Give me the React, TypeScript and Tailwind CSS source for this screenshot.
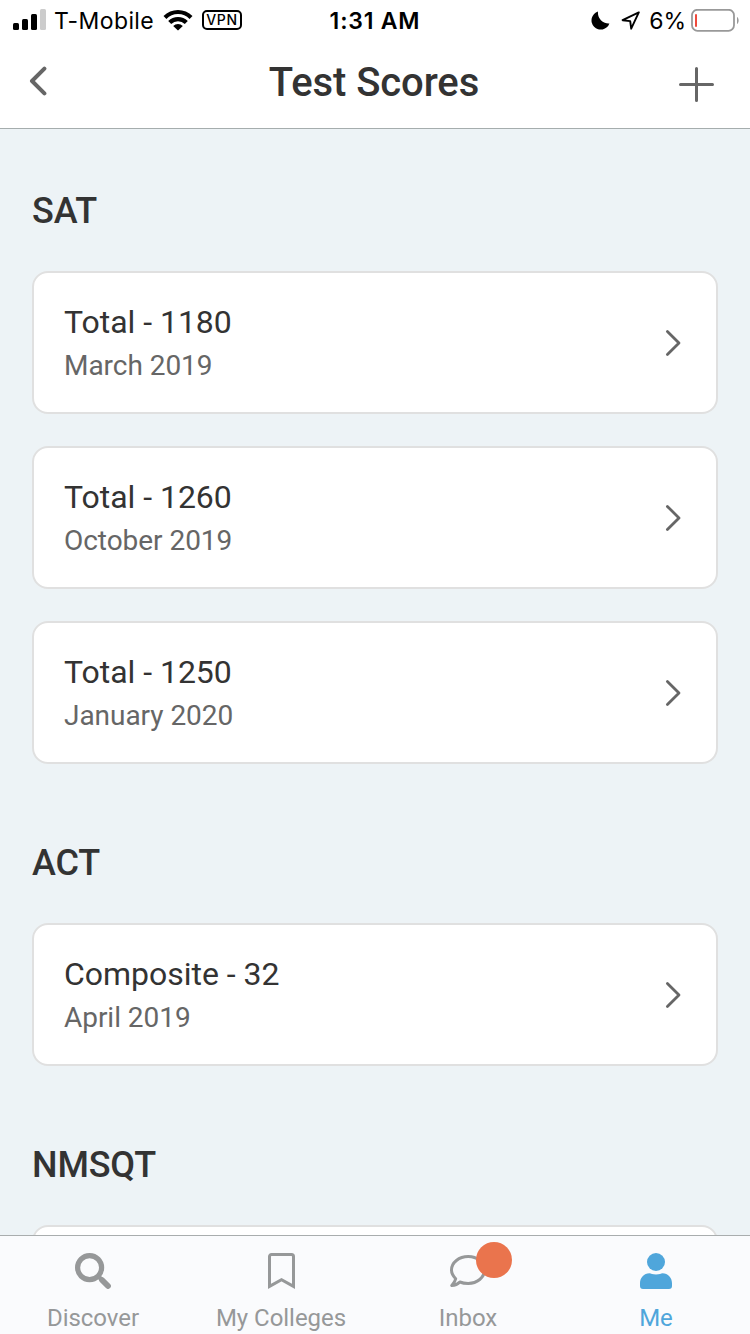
import type { ReactNode } from "react";

type Score = {
  label: string;
  date: string;
};

type Section = {
  title: string;
  scores: Score[];
};

const sections: Section[] = [
  {
    title: "SAT",
    scores: [
      { label: "Total - 1180", date: "March 2019" },
      { label: "Total - 1260", date: "October 2019" },
      { label: "Total - 1250", date: "January 2020" },
    ],
  },
  {
    title: "ACT",
    scores: [{ label: "Composite - 32", date: "April 2019" }],
  },
  {
    title: "NMSQT",
    scores: [{ label: "", date: "" }],
  },
];

function StatusBar() {
  return (
    <div className="grid grid-cols-[1fr_auto_1fr] items-center h-10 pl-[13px] pr-[11px] text-black font-['Inter','Liberation_Sans',sans-serif]">
      <div className="flex items-center">
        <svg width="33" height="22" viewBox="0 0 33 22">
          <rect x="0" y="14" width="6" height="7" rx="1.5" />
          <rect x="9" y="10" width="6" height="11" rx="1.5" />
          <rect x="18" y="5" width="6" height="16" rx="1.5" />
          <rect x="27" y="0" width="6" height="21" rx="1.5" fill="#cccccc" />
        </svg>
        <span className="ml-2 w-[101px] pt-0.5 text-[23px] leading-7 tracking-[0.4px] whitespace-nowrap">
          T-Mobile
        </span>
        <svg className="ml-2" width="30" height="22" viewBox="0 0 30 22">
          <path d="M0.5 7a20.5 20.5 0 0 1 29 0l-2.9 2.9a16.4 16.4 0 0 0-23.2 0z" />
          <path d="M5.2 12a13.9 13.9 0 0 1 19.6 0l-3 3a9.7 9.7 0 0 0-13.6 0z" />
          <path d="M10.2 17a6.8 6.8 0 0 1 9.6 0L15 21.6z" />
        </svg>
        <span className="ml-[9px] flex items-center justify-center w-10 h-5 border-2 border-black rounded-[5px] text-[14px] leading-none font-medium tracking-[0.6px]">
          VPN
        </span>
      </div>

      <span className="pt-0.5 pr-0.5 text-[23px] leading-7 font-semibold tracking-[0.8px]">
        1:31 AM
      </span>

      <div className="flex items-center justify-end">
        <svg width="19" height="19" viewBox="0 0 19 19">
          <path d="M7 0.6A10.6 10.6 0 0 0 18.4 12.4 9.2 9.2 0 1 1 7 0.6z" />
        </svg>
        <svg
          className="ml-[11px]"
          width="19"
          height="19"
          viewBox="0 0 19 19"
          fill="none"
          stroke="black"
          strokeWidth="1.9"
          strokeLinejoin="round"
        >
          <path d="M17.8 1.4 1.6 9.2l7.6.9 1 7.6z" />
        </svg>
        <span className="ml-[9px] pt-0.5 text-[23px] leading-7 tracking-[-0.1px]">
          6%
        </span>
        <svg className="ml-[5px]" width="48" height="23" viewBox="0 0 48 23">
          <rect
            x="1"
            y="0.8"
            width="42"
            height="21"
            rx="5.5"
            fill="none"
            stroke="#999999"
            strokeWidth="1.8"
          />
          <rect x="4" y="5" width="2" height="13" rx="1" fill="#ef4a3c" />
          <path d="M46 8c2.2 1.2 2.2 5.8 0 7z" fill="#999999" />
        </svg>
      </div>
    </div>
  );
}

function Header() {
  return (
    <header className="shrink-0 h-[129px] bg-white border-b border-[#a5adad]">
      <StatusBar />
      <div className="grid grid-cols-[1fr_auto_1fr] items-center h-[84px] px-[29px]">
        <button aria-label="Back" className="justify-self-start pb-0.5">
          <svg
            width="18"
            height="30"
            viewBox="0 0 18 30"
            fill="none"
            stroke="#666666"
            strokeWidth="4"
            strokeLinecap="round"
            strokeLinejoin="round"
          >
            <path d="M15.4 2.6 3 15l12.4 12.4" />
          </svg>
        </button>
        <h1 className="pt-0.5 pr-0.5 text-[40px] leading-[48px] font-medium tracking-[-0.1px] text-[#333333]">
          Test Scores
        </h1>
        <button aria-label="Add" className="justify-self-end mr-[7px] pt-1">
          <svg
            width="35"
            height="35"
            viewBox="0 0 35 35"
            stroke="#666666"
            strokeWidth="3"
            strokeLinecap="round"
          >
            <path d="M17.5 1.5v32M1.5 17.5h32" />
          </svg>
        </button>
      </div>
    </header>
  );
}

function ScoreCard({ score }: { score: Score }) {
  return (
    <div className="flex items-center justify-between h-[143px] pl-[30px] pr-[35px] bg-white border-2 border-[#e0e0e0] rounded-2xl">
      <div className="flex flex-col gap-2">
        <p className="text-[32px] leading-[38px] tracking-[-0.03px] text-[#333333]">
          {score.label}
        </p>
        <p className="text-[28px] leading-[33px] tracking-[-0.04px] text-[#666666]">
          {score.date}
        </p>
      </div>
      <svg
        width="16"
        height="28"
        viewBox="0 0 16 28"
        fill="none"
        stroke="#666666"
        strokeWidth="2.8"
        strokeLinecap="round"
        strokeLinejoin="round"
      >
        <path d="M2.4 2.4 14 14 2.4 25.6" />
      </svg>
    </div>
  );
}

type TabProps = {
  label: string;
  active?: boolean;
  children: ReactNode;
};

function Tab({ label, active, children }: TabProps) {
  return (
    <button
      className={`flex flex-col items-center pt-[17px] ${
        active ? "text-[#4fa6db]" : "text-[#969899]"
      }`}
    >
      <span className="relative flex items-center justify-center h-9">
        {children}
      </span>
      <span className="mt-[15px] text-[24px] leading-7 tracking-[-0.03px] whitespace-nowrap">
        {label}
      </span>
    </button>
  );
}

function TabBar() {
  return (
    <nav className="shrink-0 grid grid-cols-[186px_190px_184px_192px] h-[99px] bg-[#fafbfd] border-t border-[#a9adae]">
      <Tab label="Discover">
        <svg
          width="36"
          height="36"
          viewBox="0 0 36 36"
          fill="none"
          stroke="currentColor"
        >
          <circle cx="14.6" cy="14.6" r="12" strokeWidth="5.2" />
          <path d="M23 23l4 4" strokeWidth="4.4" />
          <path
            d="M27 27l6 6"
            strokeWidth="5.8"
            strokeLinecap="round"
            strokeLinejoin="round"
          />
        </svg>
      </Tab>
      <Tab label="My Colleges">
        <svg
          width="27"
          height="36"
          viewBox="0 0 27 36"
          fill="none"
          stroke="currentColor"
          strokeWidth="3"
        >
          <path d="M1.5 33.4V3.5a2 2 0 0 1 2-2h20a2 2 0 0 1 2 2v29.9L13.5 26.8z" />
        </svg>
      </Tab>
      <Tab label="Inbox">
        <svg
          width="36"
          height="36"
          viewBox="0 0 36 36"
          fill="none"
          stroke="currentColor"
          strokeWidth="3"
          strokeLinejoin="round"
        >
          <path d="M18.2 3.6C9 3.6 1.5 9.5 1.5 17c0 3.1 1.5 6 4.2 8.700-.5 2.400-2 4.600-3.900 6.800 3.400-.1 6-1.400 8-3.500 2.600 1 5.400 1.400 8.400 1.400 9 0 16.300-6 16.300-13.400S27.200 3.600 18.200 3.600z" />
        </svg>
        <span className="absolute left-[26px] -top-[11px] size-9 rounded-full bg-[#ea744d]" />
      </Tab>
      <Tab label="Me" active>
        <svg width="32" height="36" viewBox="0 0 32 36" fill="currentColor">
          <circle cx="16" cy="9" r="9" />
          <path d="M9.500 20.300c1.500 0 3 1.300 6.500 1.300s5-1.300 6.500-1.300c5.500 0 9.500 4.500 9.500 10V33a3 3 0 0 1-3 3H3a3 3 0 0 1-3-3v-2.700c0-5.500 4-10 9.500-10z" />
        </svg>
      </Tab>
    </nav>
  );
}

export default function App() {
  return (
    <div className="flex flex-col w-[750px] h-[1334px] overflow-hidden bg-[#edf3f6] font-['Roboto','Liberation_Sans',sans-serif]">
      <Header />
      <main className="flex-1 min-h-0 overflow-hidden px-8 pt-[61px]">
        {sections.map((section) => (
          <section key={section.title} className="mb-[78px]">
            <h2 className="text-[36px] leading-[42px] font-medium tracking-[-0.15px] text-[#333333]">
              {section.title}
            </h2>
            <div className="flex flex-col gap-8 mt-[39px]">
              {section.scores.map((score) => (
                <ScoreCard key={score.label} score={score} />
              ))}
            </div>
          </section>
        ))}
      </main>
      <TabBar />
    </div>
  );
}
